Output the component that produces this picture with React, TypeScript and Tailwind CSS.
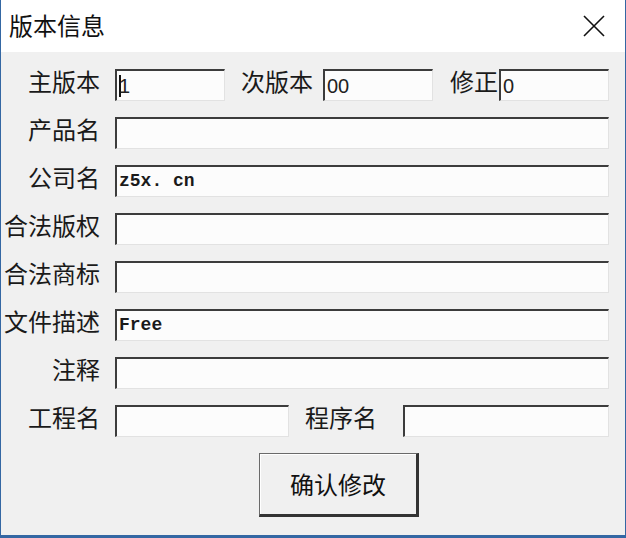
import React from "react";

const cjk = { fontFamily: '"Noto Sans CJK SC", "Noto Sans", sans-serif' };

function Field({ w, value, mono, caret }: { w: string; value?: string; mono?: boolean; caret?: boolean }) {
  return (
    <div
      className={`${w} flex h-[32px] items-center border-l-2 border-t-2 border-b border-r border-l-[#3c3c3c] border-t-[#3c3c3c] border-b-[#e2e2e2] border-r-[#e2e2e2] bg-[#fcfcfc] pl-[2px]`}
    >
      {caret && <span className="mr-[-2px] h-[22px] w-[2px] bg-[#111]" />}
      {value && (
        <span
          className={mono ? "text-[18px] font-bold text-[#1a1a1a]" : "text-[20px] text-[#222]"}
          style={{
            fontFamily: mono ? '"Liberation Mono", monospace' : '"Liberation Sans", Arial, sans-serif',
          }}
        >
          {value}
        </span>
      )}
    </div>
  );
}

function Label({ text, className = "" }: { text: string; className?: string }) {
  return (
    <span className={`mb-[8px] text-[24px] leading-none text-[#1a1a1a] ${className}`} style={cjk}>
      {text}
    </span>
  );
}

function Row({ label, value, mono }: { label: string; value?: string; mono?: boolean }) {
  return (
    <div className="flex items-center">
      <Label text={label} className="w-[99px] whitespace-nowrap text-right" />
      <div className="ml-[15px]">
        <Field w="w-[494px]" value={value} mono={mono} />
      </div>
    </div>
  );
}

export default function App() {
  return (
    <div className="flex h-[538px] w-[626px] flex-col border-x border-b-[3px] border-x-[#3467a3] border-b-[#3467a3] bg-[#f0f0f0]">
      <div className="flex h-[52px] items-center justify-between bg-white pl-[8px] pr-[20px]">
        <span className="mb-[2px] text-[24px] leading-none text-[#111]" style={cjk}>
          版本信息
        </span>
        <svg width="22" height="22" viewBox="0 0 22 22">
          <path d="M1 1 L21 21 M21 1 L1 21" stroke="#111" strokeWidth="1.6" fill="none" />
        </svg>
      </div>

      <div className="flex flex-col gap-[16px] pt-[17px]">
        <div className="flex items-center">
          <Label text="主版本" className="w-[99px] text-right" />
          <div className="ml-[15px]">
            <Field w="w-[110px]" value="1" caret />
          </div>
          <Label text="次版本" className="ml-[16px]" />
          <div className="ml-[10px]">
            <Field w="w-[110px]" value="00" />
          </div>
          <Label text="修正" className="ml-[17px]" />
          <div className="ml-[1px]">
            <Field w="w-[110px]" value="0" />
          </div>
        </div>
        <Row label="产品名" />
        <Row label="公司名" value="z5x. cn" mono />
        <Row label="合法版权" />
        <Row label="合法商标" />
        <Row label="文件描述" value="Free" mono />
        <Row label="注释" />
        <div className="flex items-center">
          <Label text="工程名" className="w-[99px] text-right" />
          <div className="ml-[15px]">
            <Field w="w-[174px]" />
          </div>
          <Label text="程序名" className="ml-[16px]" />
          <div className="ml-[26px]">
            <Field w="w-[206px]" />
          </div>
        </div>
        <div className="flex">
          <button
            type="button"
            className="ml-[258px] flex h-[64px] w-[160px] items-center justify-center border-l border-t border-b-[3px] border-r-[3px] border-l-[#6a6a6a] border-t-[#6a6a6a] border-b-[#333] border-r-[#333] bg-[#f0f0f0] shadow-[inset_1px_1px_0_#ffffff]"
          >
            <span className="text-[24px] leading-none text-[#111]" style={cjk}>
              确认修改
            </span>
          </button>
        </div>
      </div>
    </div>
  );
}
